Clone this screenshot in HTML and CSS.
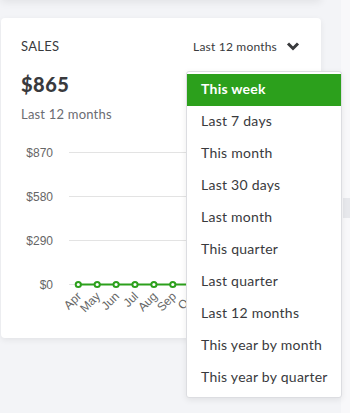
FILE: index.html
```html
<!DOCTYPE html>
<html lang="en">
<head>
    <meta charset="UTF-8">
    <title>Sales</title>
    <link rel="stylesheet" href="styles.css">
</head>
<body>
    <div class="page">
        <div class="column">
            <div class="prev-card"></div>

            <div class="card">
                <div class="card-head">
                    <span class="card-title">SALES</span>
                    <button class="period">
                        Last 12 months
                        <svg class="chevron" width="14" height="10" viewBox="0 0 14 10">
                            <path d="M2 2.5 L7 7.5 L12 2.5" fill="none" stroke="#393a3d" stroke-width="3"/>
                        </svg>
                    </button>
                </div>
                <div class="amount">$865</div>
                <div class="sub">Last 12 months</div>

                <svg class="chart" width="320" height="180" viewBox="1 140 320 180">
                    <g class="grid">
                        <line x1="69" y1="153.5" x2="321" y2="153.5"/>
                        <line x1="69" y1="197.5" x2="321" y2="197.5"/>
                        <line x1="69" y1="241.5" x2="321" y2="241.5"/>
                        <line x1="69" y1="285.5" x2="321" y2="285.5"/>
                    </g>
                    <g class="y-labels">
                        <text x="53" y="157.5">$870</text>
                        <text x="53" y="201.5">$580</text>
                        <text x="53" y="245.5">$290</text>
                        <text x="53" y="289.5">$0</text>
                    </g>
                    <line class="series" x1="78" y1="285.5" x2="286" y2="285.5"/>
                    <g class="points">
                        <circle cx="78.3" cy="285.5" r="2.6"/>
                        <circle cx="97.2" cy="285.5" r="2.6"/>
                        <circle cx="116.1" cy="285.5" r="2.6"/>
                        <circle cx="135" cy="285.5" r="2.6"/>
                        <circle cx="153.9" cy="285.5" r="2.6"/>
                        <circle cx="172.8" cy="285.5" r="2.6"/>
                        <circle cx="191.7" cy="285.5" r="2.6"/>
                    </g>
                    <g class="x-labels">
                        <text transform="translate(82 298) rotate(-45)">Apr</text>
                        <text transform="translate(101 298) rotate(-45)">May</text>
                        <text transform="translate(120 298) rotate(-45)">Jun</text>
                        <text transform="translate(139 298) rotate(-45)">Jul</text>
                        <text transform="translate(158 298) rotate(-45)">Aug</text>
                        <text transform="translate(177 298) rotate(-45)">Sep</text>
                        <text transform="translate(196 298) rotate(-45)">Oct</text>
                    </g>
                </svg>

                <ul class="menu">
                    <li class="active">This week</li>
                    <li>Last 7 days</li>
                    <li>This month</li>
                    <li>Last 30 days</li>
                    <li>Last month</li>
                    <li>This quarter</li>
                    <li>Last quarter</li>
                    <li>Last 12 months</li>
                    <li>This year by month</li>
                    <li>This year by quarter</li>
                </ul>
            </div>
        </div>

        <div class="side">
            <div class="side-band"></div>
        </div>
    </div>
</body>
</html>
```

FILE: styles.css
```css
body {
    margin: 0;
    background-color: #f3f4f7;
    font-family: Lato, "Open Sans", sans-serif;
    color: #393a3d;
    width: 350px;
    height: 413px;
    overflow: hidden;
}

.page {
    display: flex;
    height: 413px;
}

.column {
    width: 320px;
    margin-left: 1px;
}

.side {
    margin-left: 20px;
    flex: 1;
    background-color: #f8f8fa;
    padding-top: 198px;
}

.side-band {
    height: 20px;
    margin-left: 2px;
    background-color: #e7e8ec;
}

/* card above, only its shadow shows */
.prev-card {
    height: 20px;
    margin-top: -20px;
    background-color: #f3f4f7;
    box-shadow: 0 2px 8px rgba(0, 0, 0, 0.08);
}

.card {
    position: relative;
    margin-top: 18px;
    height: 320px;
    box-sizing: border-box;
    padding: 20px 20px 0 20px;
    background-color: #fff;
    border-radius: 4px;
    box-shadow: 0 2px 6px rgba(0, 0, 0, 0.07);
}

.card-head {
    display: flex;
    justify-content: space-between;
    align-items: center;
    height: 16px;
}

.card-title {
    font-size: 13px;
    letter-spacing: 0.3px;
}

.period {
    display: flex;
    align-items: center;
    gap: 9px;
    border: none;
    background: none;
    padding: 0;
    margin-right: 1px;
    font-family: Lato, "Open Sans", sans-serif;
    font-size: 12px;
    letter-spacing: 0.2px;
    color: #393a3d;
}

.amount {
    margin-top: 18px;
    font-size: 20px;
    font-weight: 900;
    letter-spacing: 0.5px;
}

.sub {
    margin-top: 10px;
    font-size: 13px;
    letter-spacing: 0.2px;
    color: #6b6c72;
}

.chart {
    display: block;
    margin: 17px 0 0 -20px;
}

.grid line {
    stroke: #e3e3e3;
    stroke-width: 1;
}

.y-labels text {
    font-family: "Liberation Sans", Arial, sans-serif;
    font-size: 12px;
    fill: #666;
    text-anchor: end;
}

.x-labels text {
    font-family: "Liberation Sans", Arial, sans-serif;
    font-size: 12px;
    fill: #666;
    text-anchor: end;
}

.series {
    stroke: #2ca01c;
    stroke-width: 2;
}

.points circle {
    fill: #fff;
    stroke: #2ca01c;
    stroke-width: 2;
}

.menu {
    position: absolute;
    left: 185px;
    top: 53px;
    width: 156px;
    box-sizing: border-box;
    margin: 0;
    padding: 2px 0 3px 0;
    list-style: none;
    background-color: #fff;
    border: 1px solid #dcdde1;
    border-radius: 3px;
    box-shadow: 0 2px 6px rgba(0, 0, 0, 0.08);
}

.menu li {
    height: 32px;
    line-height: 30px;
    padding-left: 14px;
    font-size: 14px;
    letter-spacing: 0.25px;
    color: #393a3d;
}

.menu li.active {
    background-color: #2ca01c;
    color: #fff;
    font-weight: 700;
}
```
